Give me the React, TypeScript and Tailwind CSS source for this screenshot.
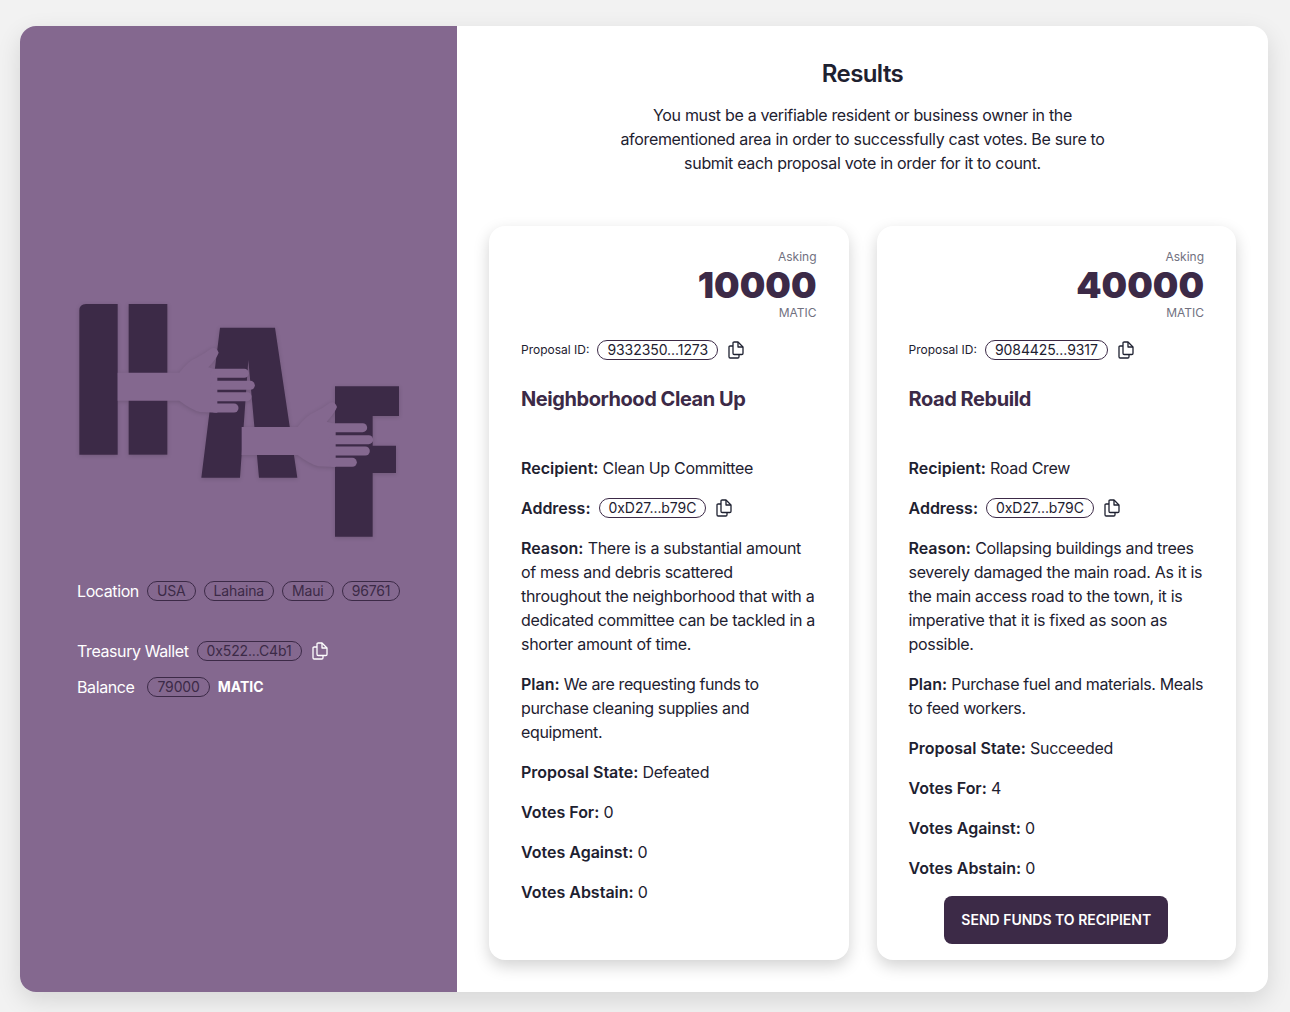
type Proposal = {
  asking: string;
  id: string;
  title: string;
  recipient: string;
  reason: string;
  plan: string;
  state: string;
  votesFor: string;
};

const proposals: Proposal[] = [
  {
    asking: "10000",
    id: "9332350...1273",
    title: "Neighborhood Clean Up",
    recipient: "Clean Up Committee",
    reason:
      "There is a substantial amount of mess and debris scattered throughout the neighborhood that with a dedicated committee can be tackled in a shorter amount of time.",
    plan: "We are requesting funds to purchase cleaning supplies and equipment.",
    state: "Defeated",
    votesFor: "0",
  },
  {
    asking: "40000",
    id: "9084425...9317",
    title: "Road Rebuild",
    recipient: "Road Crew",
    reason:
      "Collapsing buildings and trees severely damaged the main road. As it is the main access road to the town, it is imperative that it is fixed as soon as possible.",
    plan: "Purchase fuel and materials. Meals to feed workers.",
    state: "Succeeded",
    votesFor: "4",
  },
];

const CopyIcon = () => (
  <svg
    viewBox="0 0 16 18"
    fill="none"
    stroke="currentColor"
    strokeWidth="1.3"
    strokeLinejoin="round"
    className="ml-[10px] w-4 h-[18px]"
  >
    <path d="M5 2.2 Q5 1 6.2 1 H10 L15 6 V12.3 Q15 13.5 13.8 13.5 H6.2 Q5 13.5 5 12.3 Z" />
    <path d="M10 1 V6 H15" />
    <path d="M5 5 H2.2 Q1 5 1 6.2 V15.8 Q1 17 2.2 17 H9.8 Q11 17 11 15.8 V13.5" />
  </svg>
);

const Hand = ({ dx, dy, armStart }: { dx: number; dy: number; armStart: number }) => (
  <g transform={`translate(${dx} ${dy})`} fill="#84688f" stroke="#84688f">
    <path
      strokeWidth="0"
      d={`M${armStart} 248 L358 248 Q385 212 410 203 Q435 190 455 175 Q470 170 476 188 Q470 205 445 232 L472 240 L472 368 L420 366 Q395 360 358 332 L${armStart} 332 Z`}
    />
    <g strokeLinecap="round" strokeWidth="27" fill="none">
      <path d="M465 250 L553 250" />
      <path d="M465 286 L571 286" />
      <path d="M465 320 L561 320" />
      <path d="M465 354 L522 354" />
    </g>
  </g>
);

const Logo = () => (
  <svg viewBox="0 0 1050 780" className="w-[350px] h-[260px] -ml-[17px] drop-shadow-sm">
    <g fill="#3c2a47">
      <path d="M58 62 Q58 42 78 42 L173 42 L173 494 L58 494 Z" />
      <rect x="206" y="42" width="116" height="452" />
      <polygon points="480,113 645,113 712,563 597,563 565,210 540,563 424,563" />
      <path d="M825 289 H1017 V378 H938 V467 H1008 V549 H938 V740 H825 Z" />
    </g>
    <Hand dx={0} dy={0} armStart={173} />
    <Hand dx={355} dy={163} armStart={190} />
  </svg>
);

const Chip = ({ children }: { children: React.ReactNode }) => (
  <span className="rounded-full border border-[#3c2a47] px-[9px] h-5 flex items-center text-sm tracking-[-0.01em] text-[#3c2a47]">
    {children}
  </span>
);

const CardChip = ({ children }: { children: React.ReactNode }) => (
  <span className="rounded-full border border-[#3c2a47] px-[9px] h-5 flex items-center text-sm tracking-[-0.005em] text-[#1e2130]">
    {children}
  </span>
);

const Field = ({
  label,
  tight,
  children,
}: {
  label: string;
  tight?: boolean;
  children: React.ReactNode;
}) => (
  <p className={tight ? "mb-4 tracking-[-0.023em]" : "mb-4 tracking-[-0.019em]"}>
    <span className="font-semibold tracking-normal">{label}</span> {children}
  </p>
);

const ProposalCard = ({ p, showButton }: { p: Proposal; showButton?: boolean }) => (
  <div className="relative bg-white rounded-2xl shadow-[0_6px_16px_rgba(0,0,0,0.18)] px-8 pt-6 h-[734px] flex-1 text-[#1e2130]">
    <div className="flex flex-col items-end">
      <span className="text-xs leading-[14px] text-[#71717f]">Asking</span>
      <span className="text-[36px] leading-[42px] font-black text-[#3c2a47]">{p.asking}</span>
      <span className="text-xs leading-[14px] text-[#71717f]">MATIC</span>
    </div>
    <div className="flex items-center mt-[18px] h-6">
      <span className="text-xs mr-2">Proposal ID:</span>
      <CardChip>{p.id}</CardChip>
      <CopyIcon />
    </div>
    <h3 className="text-xl font-bold tracking-[-0.022em] text-[#3c2a47] mt-[23px] h-[71px] leading-7">
      {p.title}
    </h3>
    <Field label="Recipient:">{p.recipient}</Field>
    <div className="flex items-center mb-4 h-6">
      <span className="font-semibold mr-2">Address:</span>
      <CardChip>0xD27...b79C</CardChip>
      <CopyIcon />
    </div>
    <Field label="Reason:">{p.reason}</Field>
    <Field label="Plan:" tight>
      {p.plan}
    </Field>
    <Field label="Proposal State:">{p.state}</Field>
    <Field label="Votes For:">{p.votesFor}</Field>
    <Field label="Votes Against:">0</Field>
    <Field label="Votes Abstain:">0</Field>
    {showButton && (
      <button className="block mx-auto w-56 h-12 rounded-lg bg-[#3c2a47] text-white text-sm font-semibold uppercase">
        Send funds to recipient
      </button>
    )}
  </div>
);

export default function App() {
  return (
    <div className="h-[1012px] bg-[#f2f2f2] px-5 pt-[26px] font-['Inter',sans-serif] overflow-hidden">
      <div className="flex h-[966px] w-[1248px] rounded-2xl bg-white overflow-hidden shadow-[0_8px_24px_rgba(0,0,0,0.12)]">
        <div className="w-[437px] bg-[#84688f] pl-[57px] pt-[264px] text-white">
          <Logo />
          <div className="flex items-center gap-2 mt-[29px] h-6">
            <span className="tracking-[-0.025em]">Location</span>
            <Chip>USA</Chip>
            <Chip>Lahaina</Chip>
            <Chip>Maui</Chip>
            <Chip>96761</Chip>
          </div>
          <div className="flex items-center mt-9 h-6">
            <span className="mr-2 tracking-[-0.025em]">Treasury Wallet</span>
            <Chip>0x522...C4b1</Chip>
            <CopyIcon />
          </div>
          <div className="flex items-center mt-3 h-6">
            <span className="mr-[13px] tracking-[-0.025em]">Balance</span>
            <Chip>79000</Chip>
            <span className="ml-2 text-sm font-bold">MATIC</span>
          </div>
        </div>
        <div className="flex-1 px-8 pt-8">
          <h2 className="text-2xl font-semibold tracking-[-0.024em] text-center text-[#1e2130]">Results</h2>
          <p className="w-[500px] mx-auto mt-[13px] text-center tracking-[-0.02em] text-[#1e2130]">
            You must be a verifiable resident or business owner in the aforementioned area in order to
            successfully cast votes. Be sure to submit each proposal vote in order for it to count.
          </p>
          <div className="flex gap-7 mt-[51px]">
            {proposals.map((p, i) => (
              <ProposalCard key={p.id} p={p} showButton={i === 1} />
            ))}
          </div>
        </div>
      </div>
    </div>
  );
}
